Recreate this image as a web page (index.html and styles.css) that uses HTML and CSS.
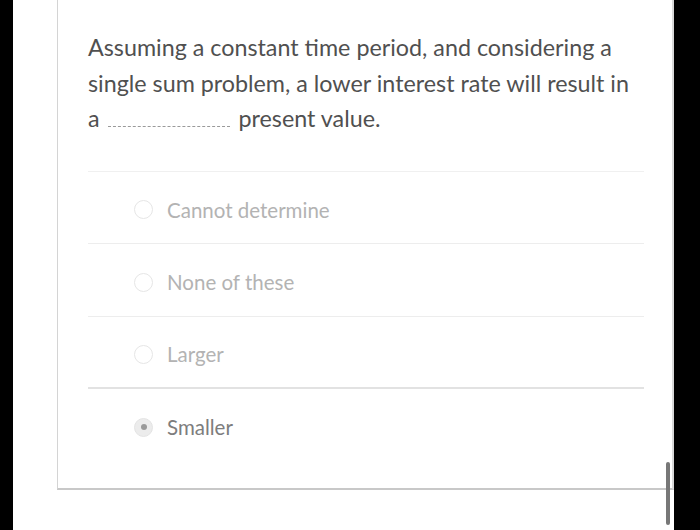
FILE: index.html
```html
<!DOCTYPE html>
<html>
<head>
<meta charset="utf-8">
<link rel="stylesheet" href="styles.css">
</head>
<body>
<div class="screen">
  <div class="bar-left"></div>
  <div class="page">
    <div class="card">
      <div class="question">
        <p>Assuming a constant time period, and considering a single sum problem, a lower interest rate will result in a <span class="blank"></span> present value.</p>
      </div>
      <div class="answers">
        <div class="answer">
          <span class="radio"></span>
          <span class="label">Cannot determine</span>
        </div>
        <div class="answer">
          <span class="radio"></span>
          <span class="label">None of these</span>
        </div>
        <div class="answer">
          <span class="radio"></span>
          <span class="label">Larger</span>
        </div>
        <div class="answer selected">
          <span class="radio"></span>
          <span class="label">Smaller</span>
        </div>
      </div>
    </div>
    <div class="thumb"></div>
  </div>
  <div class="bar-right"></div>
</div>
</body>
</html>
```
FILE: styles.css
```css
html, body {
  margin: 0;
  padding: 0;
  background: #000;
}
.screen {
  display: flex;
  width: 700px;
  height: 530px;
  overflow: hidden;
}
.bar-left {
  width: 13px;
  flex: none;
  background: #000;
}
.bar-right {
  flex: 1;
  background: #000;
}
.page {
  position: relative;
  width: 661px;
  flex: none;
  background: #fff;
}
.card {
  margin-left: 44px;
  height: 490px;
  box-sizing: border-box;
  border-left: 1px solid #d4d4d4;
  border-right: 2px solid #d8d8d8;
  border-bottom: 2px solid #c8c8c8;
  padding: 0 28px 0 30px;
  font-family: Lato, "Open Sans", sans-serif;
}
.question p {
  margin: 0;
  padding-top: 30px;
  font-size: 23.3px;
  line-height: 35.5px;
  color: #505050;
  padding-bottom: 34px;
  border-bottom: 1px solid #f0f0f0;
}
.blank {
  display: inline-block;
  width: 122px;
  height: 1px;
  border-bottom: 1px dashed #9a9a9a;
  vertical-align: baseline;
  margin: 0 3px 0 2px;
}
.answer {
  display: flex;
  align-items: center;
  padding-left: 46px;
  padding-top: 5px;
  box-sizing: border-box;
  height: 72.6px;
  border-bottom: 1px solid #ededed;
}
.answer:nth-child(3) {
  border-bottom: 2px solid #e2e2e2;
}
.answer:last-child {
  border-bottom: none;
  padding-top: 3px;
}
.radio {
  width: 19px;
  height: 19px;
  border: 1px solid #e6e6e6;
  border-radius: 50%;
  box-sizing: border-box;
  margin-right: 14px;
  position: relative;
  flex: none;
}
.selected .radio {
  background: #ececec;
  border-color: #e4e4e4;
}
.selected .radio::after {
  content: "";
  position: absolute;
  left: 5.5px;
  top: 5.5px;
  width: 6px;
  height: 6px;
  border-radius: 50%;
  background: #9a9a9a;
}
.label {
  font-size: 20.5px;
  color: #b3b3b3;
}
.selected .label {
  color: #7d7d7d;
}
.thumb {
  position: absolute;
  left: 653px;
  top: 462px;
  width: 4px;
  height: 63px;
  border-radius: 2px;
  background: #777;
}
```
